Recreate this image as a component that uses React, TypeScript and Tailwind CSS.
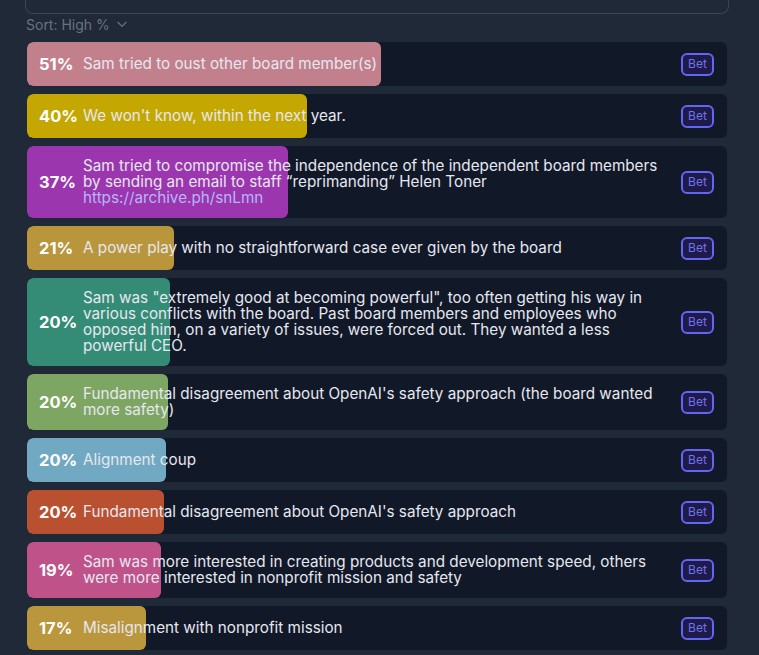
import React from "react";

type Answer = { p: number; w: number; color: string; text: React.ReactNode };

const answers: Answer[] = [
  { p: 51, w: 354, color: "#c2808d", text: "Sam tried to oust other board member(s)" },
  { p: 40, w: 280, color: "#c4a700", text: "We won't know, within the next year." },
  {
    p: 37,
    w: 261,
    color: "#9c36ae",
    text: (
      <>
        Sam tried to compromise the independence of the independent board members by sending an email to staff “reprimanding” Helen Toner
        <br />
        <span className="text-[#b4b6f8]">https://archive.ph/snLmn</span>
      </>
    ),
  },
  { p: 21, w: 147, color: "#b9953b", text: "A power play with no straightforward case ever given by the board" },
  {
    p: 20,
    w: 143,
    color: "#358c76",
    text: 'Sam was "extremely good at becoming powerful", too often getting his way in various conflicts with the board. Past board members and employees who opposed him, on a variety of issues, were forced out. They wanted a less powerful CEO.',
  },
  { p: 20, w: 141, color: "#7ea663", text: "Fundamental disagreement about OpenAI's safety approach (the board wanted more safety)" },
  { p: 20, w: 139, color: "#71a9c2", text: "Alignment coup" },
  { p: 20, w: 137, color: "#b95131", text: "Fundamental disagreement about OpenAI's safety approach" },
  { p: 19, w: 134, color: "#c0528a", text: "Sam was more interested in creating products and development speed, others were more interested in nonprofit mission and safety" },
  { p: 17, w: 119, color: "#ba963c", text: "Misalignment with nonprofit mission" },
];

function Row({ a }: { a: Answer }) {
  return (
    <div className="relative w-[700px] min-h-[44px] rounded-md bg-[#111827] overflow-hidden">
      <div
        className="absolute left-0 top-0 bottom-0 rounded-md"
        style={{ width: a.w, backgroundColor: a.color }}
      />
      <div className="relative flex min-h-[44px] items-center py-3 pl-3 pr-[13px]">
        <div className="w-[44px] shrink-0 text-[16.5px] font-bold leading-4 text-white">{a.p}%</div>
        <div className="flex-1 pr-[16px] text-[15.25px] leading-4 text-[#e6e7f0]">{a.text}</div>
        <button className="-my-1 h-[23px] w-[33px] shrink-0 rounded-md border-2 border-[#6366f1] bg-[#1e1b4b] text-[12px] leading-none text-[#7173e8]">
          Bet
        </button>
      </div>
    </div>
  );
}

export default function App() {
  return (
    <div
      className="min-h-[655px] w-[759px] bg-[#1f2937] pl-[25px]"
      style={{ fontFamily: "Inter, 'Noto Sans', sans-serif" }}
    >
      <div className="h-[14px] w-[704px] rounded-b-lg border border-t-0 border-[#3d4555]" />
      <div className="flex h-[20px] items-center gap-[5px] pl-[1px] text-[14px] text-[#6b7280]">
        <span>Sort: High %</span>
        <svg width="14" height="14" viewBox="0 0 24 24" fill="none" stroke="currentColor" strokeWidth="2" strokeLinecap="round" strokeLinejoin="round">
          <path d="m5 9 7 7 7-7" />
        </svg>
      </div>
      <div className="mt-[8px] flex flex-col gap-2 pl-[2px]">
        {answers.map((a, i) => (
          <Row key={i} a={a} />
        ))}
      </div>
    </div>
  );
}
